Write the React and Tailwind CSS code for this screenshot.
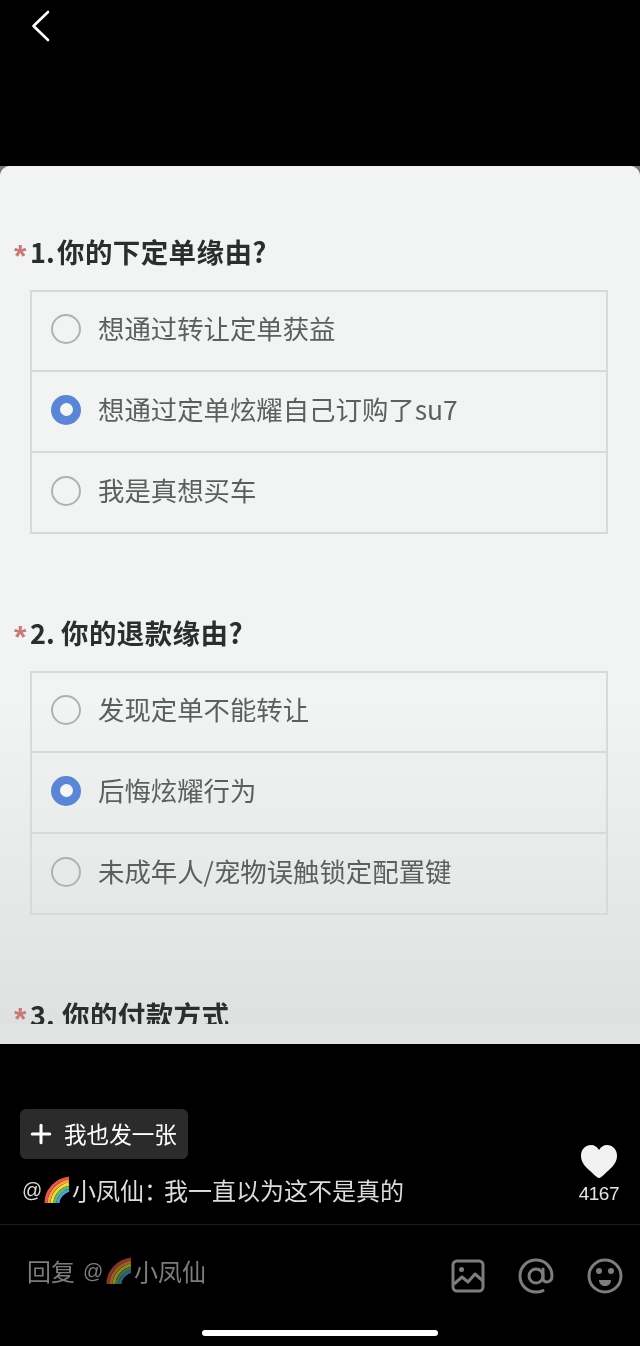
import { Plus } from "lucide-react";

const cjk = { fontFamily: '"Noto Sans CJK SC", "Noto Sans", sans-serif' };
const latin = { fontFamily: '"Liberation Sans", sans-serif' };

const Rainbow = ({ className, dim }) => (
  <svg viewBox="0 0 26 28" className={className} style={{ opacity: dim ? 0.6 : 1 }} fill="none" strokeWidth="3">
    <path d="M2 27C2 15 11 4 25 2" stroke="#e8574a" />
    <path d="M5 27C5 17 13 7 25 5" stroke="#f2a33a" />
    <path d="M8 27C8 19 15 10 25 8" stroke="#f5d548" />
    <path d="M11 27C11 21 17 13 25 11" stroke="#62bd5a" />
    <path d="M14 27C14 22 19 16 25 14" stroke="#4aa3df" />
  </svg>
);

const Radio = ({ checked }) =>
  checked ? (
    <span className="w-[30px] h-[30px] rounded-full bg-[#5b86d6] flex items-center justify-center shrink-0">
      <span className="w-[13px] h-[13px] rounded-full bg-[#f4f5f5]"></span>
    </span>
  ) : (
    <span className="w-[30px] h-[30px] rounded-full border-2 border-[#b0b2b2] shrink-0"></span>
  );

const Question = ({ num, numClass, title, options, className }) => (
  <div className={className}>
    <div className="flex items-center h-[40px] pl-[14px]">
      <span className="text-[32px] font-bold w-[16px] leading-none text-[#c77b78] mt-[8px]" style={latin}>*</span>
      <span className={`text-[27px] font-semibold text-[#2b2e2f] ${numClass}`}>{num}</span>
      <span className="text-[27.5px] font-semibold text-[#2b2e2f] tracking-[0.4px] whitespace-nowrap">{title}</span>
    </div>
    <div className="mt-[18px] ml-[30px] w-[578px] border-2 border-[#d8dada]">
      {options.map((o, i) => (
        <div key={o.text} className={`flex items-center pl-[19px] pb-[4px] gap-[17px] ${i > 0 ? "border-t-2 border-[#d8dada] h-[81px]" : "h-[78px]"}`}>
          <Radio checked={o.checked} />
          <span className="text-[26.4px] mb-[2px] text-[#5c5f60] whitespace-nowrap">{o.text}</span>
        </div>
      ))}
    </div>
  </div>
);

export default function App() {
  return (
    <div className="w-[640px] h-[1346px] bg-black flex flex-col overflow-hidden blur-[0.5px]" style={cjk}>
      <div className="h-[166px] shrink-0 pl-[31px] pt-[10px]">
        <svg viewBox="0 0 20 32" className="w-[20px] h-[32px]" fill="none" stroke="#fff" strokeWidth="2.6" strokeLinecap="round" strokeLinejoin="round">
          <path d="M17 2L2.5 16L17 30" />
        </svg>
      </div>

      <div className="h-[878px] shrink-0 bg-[#77797a]">
        <div className="h-full rounded-t-[10px] overflow-hidden flex flex-col bg-[#e2e3e3]">
          <div className="h-[858px] overflow-hidden pt-[66px] bg-[linear-gradient(180deg,#f2f3f3_0%,#f2f3f3_62%,#dfe0e0_100%)]">
            <Question
              num="1."
              numClass="w-[27px]"
              title="你的下定单缘由?"
              options={[
                { text: "想通过转让定单获益" },
                { text: "想通过定单炫耀自己订购了su7", checked: true },
                { text: "我是真想买车" },
              ]}
            />
            <Question
              className="mt-[79px]"
              num="2."
              numClass="w-[31px]"
              title="你的退款缘由?"
              options={[
                { text: "发现定单不能转让" },
                { text: "后悔炫耀行为", checked: true },
                { text: "未成年人/宠物误触锁定配置键" },
              ]}
            />
            <Question className="mt-[80px]" num="3." numClass="w-[32px]" title="你的付款方式" options={[]} />
          </div>
        </div>
      </div>

      <div className="flex-1 relative">
        <div className="flex justify-between pl-[20px] pr-[21px] pt-[65px] h-[181px] border-b border-[#1c1c1c]">
          <div>
            <div className="w-[168px] h-[50px] rounded-[6px] bg-[#2b2b2b] flex items-center pl-[6px] gap-[8px] text-white">
              <Plus className="w-[30px] h-[30px]" strokeWidth={2.4} />
              <span className="text-[22.6px] whitespace-nowrap">我也发一张</span>
            </div>
            <div className="flex items-center mt-[13px] h-[36px] text-[24px] text-[#dcdcdc] whitespace-nowrap">
              <span className="ml-[2px] w-[22px] text-[20px]" style={latin}>@</span>
              <Rainbow className="w-[26px] h-[28px]" />
              <span className="ml-[2px] w-[92px]">小凤仙：</span>
              <span>我一直以为这不是真的</span>
            </div>
          </div>
          <div className="flex flex-col items-center pt-[36px]">
            <svg viewBox="0 0 36 34" className="w-[36px] h-[34px]" fill="#f2f2f2">
              <path d="M18 33C16.5 33 14.5 31 8 25C3 20.5 0 16.5 0 10.5C0 4.5 4.5 0 10 0C13.5 0 16.5 2 18 5C19.5 2 22.5 0 26 0C31.5 0 36 4.5 36 10.5C36 16.5 33 20.5 28 25C21.5 31 19.5 33 18 33Z" />
            </svg>
            <span className="text-[19px] leading-none mt-[5px] text-[#e4e4e4] tracking-[-0.5px]" style={latin}>4167</span>
          </div>
        </div>

        <div className="flex items-center h-[95px] pl-[27px] pr-[17px] pb-[4px] text-[24px] text-[#7d7d7d] whitespace-nowrap">
          <span className="w-[56px]">回复</span>
          <span className="w-[23px] text-[20px]" style={latin}>@</span>
          <Rainbow className="w-[26px] h-[28px]" dim />
          <span className="ml-[2px]">小凤仙</span>
          <div className="ml-auto flex items-center gap-[33px] mt-[10px]">
            <svg viewBox="0 0 34 34" className="w-[34px] h-[34px]" fill="none" stroke="#7d7d7d" strokeWidth="3" strokeLinejoin="round">
              <rect x="2" y="2" width="30" height="30" rx="4" />
              <circle cx="10.5" cy="10.5" r="2.5" fill="#7d7d7d" stroke="none" />
              <path d="M3 25L11 18L17 23L24 15L32 22" />
            </svg>
            <svg viewBox="0 0 36 36" className="w-[36px] h-[36px]" fill="none" stroke="#7d7d7d" strokeWidth="3" strokeLinecap="round">
              <circle cx="18" cy="18" r="7" />
              <path d="M25 11V20C25 26 34 25 34 18C34 9 27 2 18 2C9 2 2 9 2 18C2 27 9 34 18 34C20.5 34 23 33.6 25 32.6" />
            </svg>
            <svg viewBox="0 0 36 36" className="w-[36px] h-[36px]" fill="none" stroke="#7d7d7d" strokeWidth="3">
              <circle cx="18" cy="18" r="16" />
              <circle cx="12" cy="13" r="3" fill="#7d7d7d" stroke="none" />
              <circle cx="24" cy="13" r="3" fill="#7d7d7d" stroke="none" />
              <path d="M12 22H24C24 26 21 28 18 28C15 28 12 26 12 22Z" fill="#7d7d7d" stroke="none" />
            </svg>
          </div>
        </div>

        <div className="absolute left-[202px] bottom-[10px] w-[236px] h-[6px] rounded-full bg-white"></div>
      </div>
    </div>
  );
}
